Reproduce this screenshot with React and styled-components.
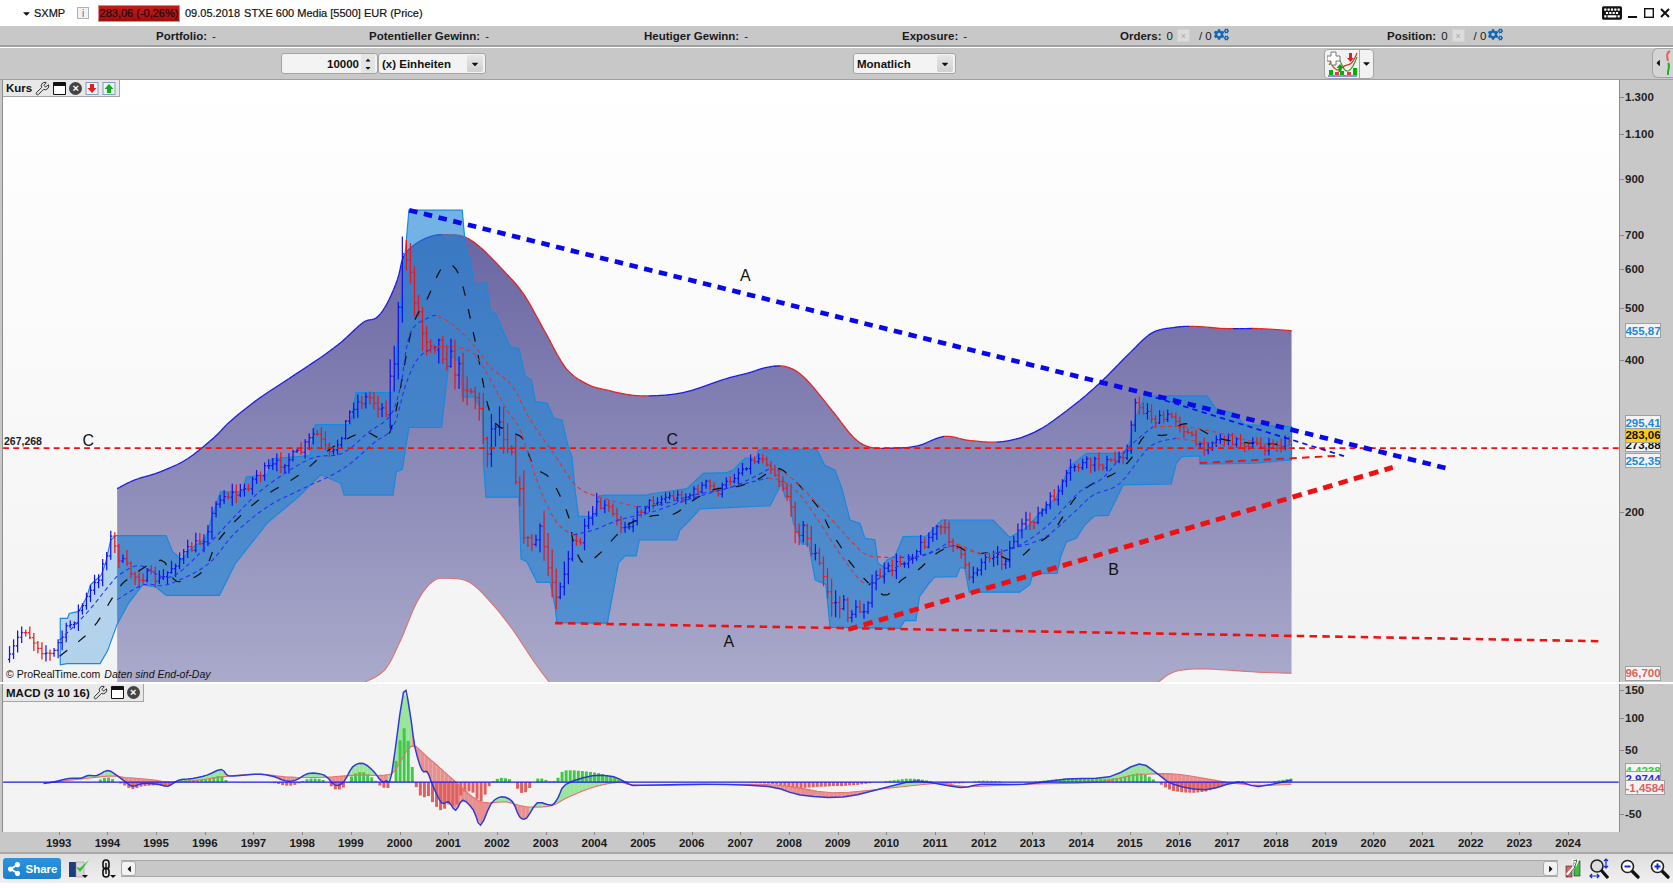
import React from "react";
import styled, { createGlobalStyle } from "styled-components";
import { FaCogs, FaKeyboard, FaShareAlt, FaCaretDown, FaCaretUp, FaCaretLeft, FaCaretRight } from "react-icons/fa";
import { Wrench } from "lucide-react";

const Global = createGlobalStyle`
  html, body { margin: 0; padding: 0; background: #fff; overflow: hidden; }
  * { box-sizing: border-box; }
`;

const FONT = `"Liberation Sans", Arial, sans-serif`;

/* ---------- data, expressed in a 1568-wide reference frame ---------- */
const interp = (pts, x) => {
  if (x <= pts[0][0]) return pts[0][1];
  for (let i = 1; i < pts.length; i++) {
    if (x <= pts[i][0]) {
      const [a, b] = pts[i - 1];
      const [c, d] = pts[i];
      return b + ((d - b) * (x - a)) / (c - a || 1);
    }
  }
  return pts[pts.length - 1][1];
};
const toPts = (a) => a.map((p) => p.join(",")).join(" ");
const smooth = (pts, n = 5) => {
  const out = [];
  for (let i = 0; i < pts.length - 1; i++) {
    const p0 = pts[Math.max(0, i - 1)];
    const p1 = pts[i];
    const p2 = pts[i + 1];
    const p3 = pts[Math.min(pts.length - 1, i + 2)];
    for (let k = 0; k < n; k++) {
      const t = k / n;
      const f = (a, b, c, d) =>
        0.5 * (2 * b + (c - a) * t + (2 * a - 5 * b + 4 * c - d) * t * t + (3 * b - a - 3 * c + d) * t * t * t);
      out.push([f(p0[0], p1[0], p2[0], p3[0]), f(p0[1], p1[1], p2[1], p3[1])]);
    }
  }
  out.push(pts[pts.length - 1]);
  return out;
};

const envTop = smooth([[109,458],[125,450],[150,442],[175,430],[200,410],[215,395],[240,375],[270,355],[300,335],[320,320],[340,302],[352,298],[362,285],[372,262],[378,240],[390,228],[405,221],[420,220],[435,222],[450,232],[470,252],[490,275],[510,310],[530,345],[550,360],[570,366],[600,371],[640,368],[680,355],[700,350],[720,344],[738,344],[755,355],[780,385],[800,410],[815,419],[835,420],[860,418],[885,409],[910,413],[940,414],[970,405],[1000,385],[1030,360],[1060,330],[1080,312],[1100,307],[1120,306],[1150,308],[1180,308],[1211,310]]);
const envRight = smooth([[1211,631],[1180,630],[1150,628],[1120,627],[1100,630],[1085,640]]);
const envBlob = smooth([[515,640],[500,620],[480,590],[460,565],[440,546],[420,542],[405,545],[390,565],[375,600],[360,628],[340,640]]);
const chanUpper = [[55.6,579.5],[62.5,579.5],[64,575],[73,573],[76.5,567],[80.6,559],[84,548],[94,539],[98,528],[103,506],[108,502],[155,502],[161,517],[170,525],[176.5,515.5],[192,504.5],[198,484],[206,461],[227,461],[230,447],[250,445],[254,430],[290,427],[295,398],[328,398],[333,368],[367.8,367.7],[382.8,197],[432.8,197],[435,222],[437,237.4],[440.6,243.6],[443.7,265.5],[455.6,265.5],[459.3,292],[464,293.6],[472,312.4],[478,325],[486,326.5],[492,353],[497.7,356],[501.5,376.5],[512.5,378],[518.7,392],[526.4,393.6],[532.6,420],[535.7,428],[538.9,460.8],[542,484],[556.7,484],[560.7,464.9],[567,464],[606,464],[609,463],[635.7,459],[643.5,458],[659,443.6],[681,443],[687.3,440.5],[693.5,434],[698,429.5],[709,429],[710.7,421.7],[765.4,421],[773,436],[782.6,440.5],[789,457.7],[796.7,487.4],[806,490.5],[810.7,504.5],[820,506],[823,528],[828,531],[831,525],[839,521],[846.6,503],[868.5,502.4],[882.6,487.4],[931,487.4],[946.6,503.6],[962,495],[976,479.5],[990,467],[1003,437],[1018.5,425],[1053,425],[1059,415.5],[1064,393.6],[1073,371],[1131.7,371],[1140,383],[1157,387.4],[1167,398],[1211,400]];
const chanLower = [[1211,431],[1177,434],[1125,435],[1125,427.4],[1108,428],[1103,434],[1098,453.6],[1053,454.5],[1039,483],[1026,483.6],[1017,492],[1009,504.5],[999.8,507.7],[994.4,521.7],[991,537.4],[968.5,537.4],[965.4,548],[956,555],[908.5,555],[904.4,532.7],[900,532],[896.6,540.5],[876,541],[870,548],[862,559],[858.5,581.7],[848,581.7],[843.5,589],[778,588],[774,547.7],[764,543.6],[758,510],[751.4,510],[748,500],[743.5,490],[739.8,466],[735.7,466],[732.6,453],[721.7,474],[687,475.5],[656,477],[645,489],[637,496.7],[634,506],[599,506],[596,521],[585.7,521],[579.5,527.4],[569,584],[521.7,583.6],[520,568.6],[515.4,545.8],[503,545.8],[493.5,526.4],[488,524],[486,466],[455,466],[453,437],[451.5,384],[443.7,372],[432.8,372],[431,340],[423,334],[420,342],[413.4,400.5],[382.8,400.5],[376.5,440],[371,442],[367.8,464],[322,464],[318.7,453],[300,445],[280,465],[250,490],[220,528],[205,558],[155,558],[145,550],[133,548],[120,565],[109,585],[100,610],[93,622],[62,622],[55.6,623]];

const mid = [[8,618],[15,600],[22,588],[30,600],[40,610],[48,615],[55,600],[70,578],[90,545],[103,505],[112,525],[125,540],[140,540],[150,545],[165,525],[190,505],[205,465],[225,462],[240,445],[260,435],[280,425],[295,405],[310,430],[330,380],[345,372],[360,385],[370,330],[378,230],[385,260],[395,310],[410,320],[430,350],[445,370],[455,420],[465,390],[480,420],[493,512],[507.6,503],[515,540],[522,550],[534,518.6],[543.5,506],[559,475],[570,476],[581,493.6],[590.4,490],[606,472],[624.8,465.5],[643.5,465.5],[662,453],[671.7,462],[687.3,446.7],[703,432.7],[715.4,428],[728,446.7],[737,460.8],[742,487],[753,498],[767,528],[778,562],[795,573],[809,572],[821.6,540.5],[843.5,528],[859,515.5],[881,493.6],[896.6,512],[907.6,540.5],[918.5,528],[931,517],[940,528],[953,500],[978,478],[993.5,459],[1006,437],[1025,434],[1043.5,434],[1056,422],[1065,378],[1085,395],[1100,390],[1125,420],[1145,410],[1165,415],[1190,420],[1211,412]];

let seed = 7;
const rnd = () => {
  seed = (seed * 16807) % 2147483647;
  return seed / 2147483647;
};
const bars = [];
{
  let prev = mid[0][1];
  for (let x = 8; x <= 1211; x += 3.8) {
    const base = interp(mid, x);
    const amp = x > 360 && x < 545 ? 24 : x > 740 && x < 800 ? 18 : x > 1100 ? 8 : x > 560 && x < 730 ? 7 : 10;
    const close = base + (rnd() - 0.5) * amp;
    const hi = Math.min(prev, close) - rnd() * amp * 0.7 - 1;
    const lo = Math.max(prev, close) + rnd() * amp * 0.7 + 1;
    bars.push({ x, open: prev, close, hi, lo, up: close < prev });
    prev = close;
  }
}

const midDash = smooth([[55,615],[85,590],[108,555],[120,542],[150,525],[165,545],[190,535],[205,505],[240,470],[280,445],[310,420],[340,405],[365,405],[385,310],[400,280],[415,250],[430,258],[445,320],[460,390],[480,405],[490,412],[500,437],[515,448],[526.4,468.6],[534,489],[537,507.6],[546.7,528],[562,518.6],[576.4,503],[590.4,490.5],[610.7,483.6],[631,482],[650,468.6],[668.5,459],[690.4,456],[709,450],[728,439],[742,448],[754.5,460.8],[768.6,478],[778,496.7],[789,514],[800,531],[828,557.7],[845,543.6],[860.7,534],[878,518.6],[895,511.7],[910.7,518.6],[931,518.6],[951,525],[968.5,512],[985.7,500],[996.6,484],[1009,465.5],[1026,452.4],[1045,443.6],[1060.7,429.5],[1073,409],[1093.5,407.6],[1112,397],[1140,410],[1170,415],[1211,417]]);
const BL = "#2a2ff0";
const RD = "#e03030";
const fastRuns = [
  [BL, [[55,600],[80,575],[103,547],[112,538],[130,530],[150,540],[165,538],[190,515],[225,478],[250,455],[290,430],[320,425],[345,405],[365,390],[375,362],[384,312],[403,297],[410,296]]],
  [RD, [[410,296],[425,305],[445,325],[460,345],[480,362],[496.7,393.6],[518.5,425],[540.4,456],[565.4,467],[596.7,475]]],
  [BL, [[596.7,475],[618.6,473],[650,464],[687,456],[721.7,439]]],
  [RD, [[721.7,439],[740.4,446.7],[768.6,475],[806,515.5],[821.6,521.7],[843.5,522.4]]],
  [BL, [[843.5,522.4],[868.5,520],[890,507.7]]],
  [RD, [[890,507.7],[903,512],[918.5,518.6],[934,518.6]]],
  [BL, [[934,518.6],[956,510.8],[981,493.6],[1012,461],[1034,448],[1059,418.6],[1081,400]]],
  [RD, [[1081,400],[1110,400],[1140,405],[1180,415],[1211,418]]],
];
const slowRuns = [
  [BL, [[109,562],[134,548],[156,548],[194,529],[219,500],[250,475],[281,459],[320,440],[350,415],[368,400],[380,360],[392,335],[409,325]]],
  [RD, [[409,325],[425,325],[443,331],[456,350],[475,385],[487,403],[506,459],[521.7,490],[537,501.4]]],
  [BL, [[537,501.4],[556,496.7],[581,487],[612,479.5],[643.5,468.6],[687.3,456],[720,448]]],
  [RD, [[720,448],[737.3,453],[756,471.7],[787,518.6],[806,543.6],[815,547]]],
  [BL, [[815,547],[821.6,543.6],[846.6,528],[878,515.5],[896.6,510.8]]],
  [RD, [[896.6,510.8],[915,518],[934,518.6]]],
  [BL, [[934,518.6],[943.5,515.5],[978,504.5],[1006,481],[1025,464],[1050,453],[1078,418.6],[1103,410.8]]],
  [RD, [[1103,410.8],[1125,414],[1170,420],[1211,420]]],
];

const z = (p) => p.map(([a, b]) => [a / 3, 618.6 + b / 3.2]);
const macd = smooth([...z([[120,370],[150,365],[190,355],[225,354],[245,346],[270,346],[300,331],[325,345],[350,365],[370,378],[400,370],[440,372],[470,378],[500,360],[540,355],[580,345],[620,328],[640,347],[680,345],[730,342],[770,350],[800,362],[830,360],[865,340],[910,345],[940,375],[965,365],[990,320],[1020,310],[1050,335],[1070,362],[1085,362],[1100,340],[1133,97],[1150,150],[1165,260],[1185,330],[1200,335],[1215,375],[1240,428],[1260,425],[1280,450],[1300,420],[1330,450],[1350,495],[1380,430],[1410,410],[1440,425],[1460,470],[1480,473],[1510,428],[1550,435]]),[523,747],[530,735],[555,727],[575,728],[590,735],[600,736],[660,735],[720,737],[750,745],[790,747],[830,738],[860,732],[900,738],[920,735],[960,735],[1000,730],[1040,728],[1068,716],[1085,725],[1100,735],[1130,740],[1160,733],[1180,737],[1211,731]], 3);
const signal = smooth([...z([[120,370],[300,348],[350,352],[420,358],[470,365],[540,362],[640,348],[730,342],[800,350],[900,352],[1000,345],[1080,345],[1110,330],[1155,258],[1200,290],[1280,365],[1350,425],[1420,425],[1480,440],[1550,437]]),[530,748],[555,738],[580,733],[600,736],[700,735],[740,737],[780,743],[830,739],[880,734],[905,737],[960,735],[1030,733],[1060,727],[1090,725],[1115,727],[1150,733],[1180,736],[1211,735]], 3);

const macdSteps = [];
for (let x = 40; x <= 1211; x += 3.8) macdSteps.push({ x, m: interp(macd, x), s: interp(signal, x) });

const priceTicks = [["1.300",91],["1.100",126],["900",168],["700",220],["600",252],["500",289],["400",337],["200",480]];
const priceTags = [
  { t: "455,87", y: 310, c: "#1a88e0" },
  { t: "295,41", y: 396, c: "#1a88e0" },
  { t: "273,88", y: 417, c: "#111" },
  { t: "252,35", y: 432, c: "#1a88e0" },
  { t: "283,06", y: 408, c: "#111", bg: "#ffcc11" },
  { t: "96,700", y: 631, c: "#e06060" },
];
const macdTicks = [["150",647],["100",673],["50",703],["-50",763]];
const years = Array.from({ length: 32 }, (_, i) => 1993 + i);

/* ---------- layout ---------- */
const Shell = styled.div`
  width: 1673px; height: 888px; display: flex; flex-direction: column;
  background: #fff; font-family: ${FONT}; color: #111; overflow: hidden;
`;
const TopBar = styled.div`
  height: 26px; flex: none; display: flex; align-items: center; padding-left: 21px;
  font-size: 11px; background: #fff; -webkit-text-stroke: 0.2px #111;
`;
const Ticker = styled.span` margin-left: 2px; width: 43px; `;
const InfoBox = styled.span`
  width: 12px; height: 12px; border: 1px solid #a8b4c0; background: #f2f2f2; color: #667;
  font: 10px ${FONT}; display: flex; align-items: center; justify-content: center; margin-right: 9px;
  -webkit-text-stroke: 0;
`;
const Quote = styled.span`
  width: 82px; height: 17px; background: linear-gradient(#c41a1a, #9c0f0f); border: 1px solid #d88;
  display: flex; align-items: center; justify-content: center; color: #2a0505; margin-right: 5px; white-space: nowrap;
`;
const Dated = styled.span` margin-right: 4px; `;
const WindowKeys = styled.div`
  margin-left: auto; display: flex; align-items: center; padding-right: 3px; color: #111;
`;
const WinGlyph = styled.svg` display: block; margin-left: 6px; `;

const InfoBar = styled.div`
  height: 21px; flex: none; background: #c8c8c8; border-bottom: 2px solid #a0a0a0;
  display: grid; grid-template-columns: 213px 275px 258px 218px 267px auto;
  padding-left: 156px; align-items: center; font-size: 11.5px; font-weight: bold;
`;
const InfoCell = styled.span`
  display: flex; align-items: center; white-space: nowrap; color: #1a1a1a;
`;
const Plain = styled.span` font-weight: normal; margin-left: 5px; `;
const OffBox = styled.span`
  width: 13px; height: 13px; background: #dcdcdc; border: 1px solid #d0d0d0; margin: 0 4px 0 4px;
  font: 9px ${FONT}; color: #aaa; display: flex; align-items: center; justify-content: center;
`;
const Cogs = styled(FaCogs)` color: #1466b8; margin-left: 2px; margin-top: -3px; `;

const Toolbar = styled.div`
  height: 32px; flex: none; margin-top: 1px; background: #c8c8c8; border-bottom: 1px solid #a0a0a0;
  display: flex; align-items: center; padding-left: 281px; position: relative;
`;
const Field = styled.div`
  height: 21px; border: 1px solid #a4a4a4; border-radius: 3px; background: #f3f3f3;
  display: flex; align-items: center; font-size: 11.5px; font-weight: bold; width: ${(p) => p.$w}px;
  margin-left: ${(p) => p.$ml || 0}px; flex: none; position: relative;
`;
const SpinValue = styled.span` flex: 1; text-align: right; padding-right: 2px; `;
const SpinBtns = styled.span`
  width: 14px; height: 19px; display: flex; flex-direction: column; align-items: center; justify-content: center;
  background: #e4e4e4; margin-right: 2px; font-size: 8px; line-height: 8px;
`;
const FieldLabel = styled.span` flex: 1; padding-left: 3px; white-space: nowrap; `;
const Drop = styled.span`
  width: 16px; height: 17px; background: linear-gradient(#e8e8e8, #cfcfcf); border-radius: 2px; margin-right: 2px;
  display: flex; align-items: center; justify-content: center; font-size: 11px;
`;
const IndButton = styled.div`
  margin-left: 368px; width: 50px; height: 30px; display: flex; border: 1px solid #a4a4a4; border-radius: 4px;
  background: #f2f2f2; flex: none;
`;
const IndIcon = styled.div` width: 35px; border-right: 1px solid #a4a4a4; padding: 1px 0 0 2px; `;
const IndDrop = styled.div` flex: 1; display: flex; align-items: center; justify-content: center; font-size: 11px; `;
const SideTab = styled.div`
  position: absolute; right: 0; top: 0; width: 21px; height: 30px; background: #d4d4d4;
  border: 1px solid #a4a4a4; border-right: 0; border-radius: 6px 0 0 6px; display: flex; align-items: center;
  font-size: 10px;
`;

const Pane = styled.div`
  height: ${(p) => p.$h}px; flex: none; display: flex; background: #c8c8c8; margin-top: ${(p) => p.$mt || 0}px;
`;
const Plot = styled.div`
  margin-left: 2px; width: 1618px; height: 100%; position: relative;
  border-left: 1px solid #8c8c8c; border-right: 1px solid #8c8c8c;
  background: ${(p) => (p.$flat ? "#f3f3f3" : "linear-gradient(#ffffff, #f3f3f3)")};
`;
const ChartSvg = styled.svg` display: block; width: 100%; height: 100%; `;
const PaneBar = styled.div`
  position: absolute; left: 0; top: 0; height: ${(p) => p.$h}px; display: flex; align-items: center; gap: 3px;
  padding: 0 3px; background: #e8e8e8; border: 1px solid #a4a4a4; border-width: 0 1px 1px 0;
  font-size: 11.5px; font-weight: bold;
`;
const Win = styled.span`
  width: 13px; height: 13px; border: 1px solid #111; border-top: 4px solid #111; background: #fff; border-radius: 1px;
`;
const CloseDot = styled.span`
  width: 13px; height: 13px; border-radius: 50%; background: #444; color: #fff; font-size: 11px; line-height: 12px;
  text-align: center; font-weight: bold;
`;
const DocArrow = styled.svg` display: block; `;
const Credit = styled.div`
  position: absolute; left: 3px; bottom: 0; font-size: 10.5px; color: #111; white-space: nowrap; height: 14px;
`;
const CreditNote = styled.i` margin-left: 4px; `;
const LevelTag = styled.span`
  position: absolute; left: 1px; top: 355px; font-size: 10.5px; font-weight: bold; color: #222; line-height: 12px;
`;
const Axis = styled.div` flex: 1; position: relative; `;
const Tick = styled.span`
  position: absolute; left: 5px; font-size: 11.5px; font-weight: bold; color: #222; transform: translateY(-50%);
  &::before {
    content: ""; position: absolute; left: -5px; top: 50%; width: 4px; height: 1px; background: #888;
  }
`;
const Tag = styled.span`
  position: absolute; left: 5px; width: ${(p) => p.$w || 36}px; height: ${(p) => p.$h || 15}px; border: 1px solid #a0a0a0;
  background: ${(p) => p.$bg || "#f3f3f3"}; color: ${(p) => p.$c}; font-size: 11.5px; font-weight: bold;
  display: flex; align-items: center; justify-content: center; overflow: hidden; white-space: nowrap;
`;

const TimeAxis = styled.div`
  height: 22px; flex: none; background: #c8c8c8; border-bottom: 2px solid #a8a8a8; display: flex; padding-left: 34.4px;
`;
const Year = styled.span`
  flex: 0 0 48.7px; text-align: center; font-size: 11.5px; font-weight: bold; color: #1a1a1a; padding-top: 5px;
  position: relative;
  &::before { content: ""; position: absolute; left: 50%; top: 0; width: 1px; height: 3px; background: #888; }
`;
const BottomBar = styled.div`
  height: 29px; flex: none; background: linear-gradient(#dedede, #f0f0f0); display: flex; align-items: center; padding: 0 3px;
`;
const Share = styled.div`
  width: 58px; height: 21px; border-radius: 3px; background: linear-gradient(#2b93df, #1e80cd); color: #fff; font-size: 11.5px;
  font-weight: bold; display: flex; align-items: center; justify-content: center; gap: 5px; flex: none;
`;
const Scroll = styled.div`
  margin-left: 3px; flex: 1; height: 17px; background: #c8c8c8; border-top: 1px solid #a8a8a8; border-bottom: 1px solid #a8a8a8;
  display: flex; justify-content: space-between; align-items: center;
`;
const ScrollEnd = styled.span`
  width: 15px; height: 15px; background: #f3f3f3; border: 1px solid #aaa; border-radius: 3px; display: flex;
  align-items: center; justify-content: center; font-size: 10px;
`;
const Glyph = styled.svg` display: block; flex: none; margin-left: ${(p) => p.$ml || 0}px; `;

/* ---------- small drawings ---------- */
const DocIcon = ({ up }) => (
  <DocArrow width="14" height="13" viewBox="0 0 13 13">
    <rect x="0.5" y="0.5" width="12" height="12" fill="#eef3f8" stroke="#7fa0c0" />
    {up ? <path d="M6.5 2 L11 7 H8.5 V11 H4.5 V7 H2 Z" fill="#10b010" /> : <path d="M6.5 11 L11 6 H8.5 V2 H4.5 V6 H2 Z" fill="#e02020" />}
  </DocArrow>
);
const Magnifier = ({ sign }) => (
  <Glyph width="20" height="20" viewBox="0 0 20 20" $ml={sign === "-" ? 11 : 10}>
    <path d="M11.5 11.5 L18 18" stroke="#111" strokeWidth="3.2" strokeLinecap="round" />
    <circle cx="7.5" cy="7.5" r="6" fill="#fff" stroke="#222" strokeWidth="1.6" />
    <path d="M4.5 7.5 H10.5" stroke="#0a2ad8" strokeWidth="2" />
    {sign === "+" && <path d="M7.5 4.5 V10.5" stroke="#0a2ad8" strokeWidth="2" />}
  </Glyph>
);

const Price = () => {
  const area = [...envTop, ...envRight, ...envBlob, [109, 640]];
  const channel = [...chanUpper, ...chanLower];
  return (
    <ChartSvg viewBox="1.875 75 1516.4 564.2" preserveAspectRatio="none">
      <defs>
        <linearGradient id="env" gradientUnits="userSpaceOnUse" x1="0" y1="220" x2="0" y2="640">
          <stop offset="0" stopColor="#6a66a3" />
          <stop offset="1" stopColor="#aaaacb" />
        </linearGradient>
        <clipPath id="leftOfEnv"><rect x="0" y="0" width="109" height="700" /></clipPath>
        <clipPath id="rightOfEnv"><rect x="109" y="0" width="1200" height="700" /></clipPath>
      </defs>
      <polygon points={toPts(area)} fill="url(#env)" />
      {envTop.slice(1).map((p, i) => (
        <line key={i} x1={envTop[i][0]} y1={envTop[i][1]} x2={p[0]} y2={p[1]} strokeWidth="1.2"
          stroke={p[1] <= envTop[i][1] ? "#1a1ae0" : "#e82020"} />
      ))}
      <polyline points={toPts(envRight)} fill="none" stroke="#e07070" strokeWidth="1" />
      <polyline points={toPts(envBlob)} fill="none" stroke="#e07070" strokeWidth="1" />
      <polygon points={toPts(channel)} fill="#1e84d6" fillOpacity="0.3" clipPath="url(#leftOfEnv)" />
      <polygon points={toPts(channel)} fill="#1e84d6" fillOpacity="0.62" clipPath="url(#rightOfEnv)" />
      <polygon points={toPts(channel)} fill="none" stroke="#1a88dc" strokeWidth="1.1" />
      {bars.map((b, i) => {
        const c = b.up ? "#1010f0" : "#f01414";
        return (
          <g key={i} stroke={c} strokeWidth="1.15">
            <line x1={b.x} x2={b.x} y1={b.hi} y2={b.lo} />
            <line x1={b.x - 1.5} x2={b.x} y1={b.open} y2={b.open} />
            <line x1={b.x} x2={b.x + 1.5} y1={b.close} y2={b.close} />
          </g>
        );
      })}
      <polyline points={toPts(midDash)} fill="none" stroke="#111" strokeWidth="1.2" strokeDasharray="9 13" />
      {[...fastRuns, ...slowRuns].map(([c, pts], i) => (
        <polyline key={i} points={toPts(smooth(pts))} fill="none" stroke={c} strokeWidth="1" strokeDasharray="4 3" />
      ))}
      <line x1="2" x2="1518" y1="420" y2="420" stroke="#f01010" strokeWidth="1.8" strokeDasharray="5.5 4" />
      <line x1="520" y1="584" x2="1502" y2="601" stroke="#f01010" strokeWidth="2.4" strokeDasharray="7 5" />
      <line x1="1125" y1="434" x2="1258" y2="427" stroke="#f01010" strokeWidth="1.8" strokeDasharray="7 5" />
      <line x1="1075" y1="370" x2="1262" y2="428" stroke="#1010f0" strokeWidth="1.6" strokeDasharray="5 4" />
      <line x1="383" y1="197" x2="1361" y2="440" stroke="#0808ee" strokeWidth="4.4" strokeDasharray="8 6.2" />
      <line x1="795" y1="590" x2="1306" y2="438" stroke="#f01010" strokeWidth="4.6" strokeDasharray="9 6" />
      <g fontFamily={FONT} fontSize="15" fill="#111" textAnchor="middle">
        <text x="698.5" y="263">A</text>
        <text x="683" y="606">A</text>
        <text x="1044" y="539">B</text>
        <text x="82" y="418">C</text>
        <text x="630" y="417">C</text>
      </g>
    </ChartSvg>
  );
};

const Macd = () => (
  <ChartSvg viewBox="1.875 641 1516.4 138.7" preserveAspectRatio="none">
    {macdSteps.slice(1).map((p, i) => {
      const a = macdSteps[i];
      return (
        <polygon key={i} points={`${a.x},${a.m} ${p.x},${p.m} ${p.x},${p.s} ${a.x},${a.s}`}
          fill={p.m < p.s ? "#9be49b" : "#e88f8f"} />
      );
    })}
    {macdSteps.map((p, i) => {
      const d = (p.s - p.m) * 0.85;
      if (Math.abs(d) < 0.7 || p.x < 90) return null;
      return (
        <rect key={i} x={p.x - 1.3} width="2.8" y={d > 0 ? 733 - d : 733} height={Math.abs(d)}
          fill={d > 0 ? "#40c848" : "#e06060"} />
      );
    })}
    <polyline points={toPts(signal)} fill="none" stroke="#e87070" strokeWidth="1" />
    <polyline points={toPts(macd)} fill="none" stroke="#3038d8" strokeWidth="1.4" />
    <line x1="2" x2="1518" y1="733" y2="733" stroke="#1c1cf0" strokeWidth="1.2" />
  </ChartSvg>
);

export default function App() {
  const py = (y) => y * 1.067 - 80;
  const my = (y) => y * 1.067 - 684;
  return (
    <Shell>
      <Global />
      <TopBar>
        <FaCaretDown size={11} />
        <Ticker>SXMP</Ticker>
        <InfoBox>i</InfoBox>
        <Quote>283,06 (-0,26%)</Quote>
        <Dated>09.05.2018</Dated>
        <span>STXE 600 Media [5500] EUR (Price)</span>
        <WindowKeys>
          <FaKeyboard size={20} />
          <WinGlyph width="10" height="10" viewBox="0 0 10 10"><rect y="8" width="9" height="2" fill="#111" /></WinGlyph>
          <WinGlyph width="10" height="10" viewBox="0 0 10 10"><rect x="0.7" y="0.7" width="8.6" height="8.6" fill="none" stroke="#111" strokeWidth="1.4" /></WinGlyph>
          <WinGlyph width="10" height="10" viewBox="0 0 10 10"><path d="M1 1 L9 9 M9 1 L1 9" stroke="#111" strokeWidth="2" /></WinGlyph>
        </WindowKeys>
      </TopBar>
      <InfoBar>
        <InfoCell>Portfolio:<Plain>-</Plain></InfoCell>
        <InfoCell>Potentieller Gewinn:<Plain>-</Plain></InfoCell>
        <InfoCell>Heutiger Gewinn:<Plain>-</Plain></InfoCell>
        <InfoCell>Exposure:<Plain>-</Plain></InfoCell>
        <InfoCell>Orders:<Plain>0</Plain><OffBox>×</OffBox><Plain>/ 0</Plain><Cogs size={15} /></InfoCell>
        <InfoCell>Position:<Plain>0</Plain><OffBox>×</OffBox><Plain>/ 0</Plain><Cogs size={15} /></InfoCell>
      </InfoBar>
      <Toolbar>
        <Field $w={97}>
          <SpinValue>10000</SpinValue>
          <SpinBtns><FaCaretUp size={8} /><FaCaretDown size={8} /></SpinBtns>
        </Field>
        <Field $w={108}>
          <FieldLabel>(x) Einheiten</FieldLabel>
          <Drop><FaCaretDown size={10} /></Drop>
        </Field>
        <Field $w={103} $ml={367}>
          <FieldLabel>Monatlich</FieldLabel>
          <Drop><FaCaretDown size={10} /></Drop>
        </Field>
        <IndButton>
          <IndIcon>
            <svg width="31" height="26" viewBox="0 0 31 26">
              <path d="M2 14 C8 4 11 4 15 14 S24 22 30 6" fill="none" stroke="#28a828" strokeWidth="1.2" />
              <path d="M2 8 C8 22 12 20 16 16 S24 18 30 2" fill="none" stroke="#e03030" strokeWidth="1.2" />
              <path d="M4 1 h5 v4 h4 v5 h-4 v4 h-5 v-4 h-4 v-5 h4 z" fill="#fff" stroke="#777" />
              <path d="M22 2 h3 v5 h2 l-3.500 4 -3.500 -4 h2 z" fill="#e02020" />
              <path d="M13 13 l3.500 4 h-2 v4 h-3 v-4 h-2 z" fill="#10a010" />
              <g fill="#00b400">
                <rect x="2" y="19" width="4" height="5" />
                <rect x="13" y="20" width="4" height="4" />
                <rect x="26" y="17" width="4" height="7" />
              </g>
              <g fill="#e04040">
                <rect x="8" y="21" width="4" height="3" />
                <rect x="20" y="21" width="4" height="3" />
              </g>
              <rect x="1" y="24.500" width="29" height="1" fill="#2030c0" />
            </svg>
          </IndIcon>
          <IndDrop><FaCaretDown size={11} /></IndDrop>
        </IndButton>
        <SideTab>
          <FaCaretLeft size={10} />
          <svg width="10" height="26" viewBox="0 0 10 26">
            <path d="M7 1 C3 3 4 7 5 11" fill="none" stroke="#e86060" strokeWidth="2" />
            <path d="M5 13 C8 16 4 20 5 25" fill="none" stroke="#20b020" strokeWidth="2" />
          </svg>
        </SideTab>
      </Toolbar>
      <Pane $h={602}>
        <Plot>
          <Price />
          <PaneBar $h={17}>
            Kurs <Wrench size={15} strokeWidth={1.4} /><Win /><CloseDot>×</CloseDot><DocIcon /><DocIcon up />
          </PaneBar>
          <LevelTag>267,268</LevelTag>
          <Credit>© ProRealTime.com<CreditNote>Daten sind End-of-Day</CreditNote></Credit>
        </Plot>
        <Axis>
          {priceTicks.map(([t, y]) => <Tick key={t} style={{ top: py(y) }}>{t}</Tick>)}
          {priceTags.map((g) => (
            <Tag key={g.t} $c={g.c} $bg={g.bg} style={{ top: py(g.y) - 7.5 }}>{g.t}</Tag>
          ))}
        </Axis>
      </Pane>
      <Pane $h={148} $mt={2}>
        <Plot $flat>
          <Macd />
          <PaneBar $h={18}>
            MACD (3 10 16) <Wrench size={15} strokeWidth={1.4} /><Win /><CloseDot>×</CloseDot>
          </PaneBar>
        </Plot>
        <Axis>
          {macdTicks.map(([t, y]) => <Tick key={t} style={{ top: my(y) }}>{t}</Tick>)}
          <Tag $c="#40c848" style={{ top: 79 }}>4,4238</Tag>
          <Tag $c="#2a2ad8" style={{ top: 87 }}>2,9744</Tag>
          <Tag $c="#e06060" $w={40} style={{ top: 96 }}>-1,4584</Tag>
        </Axis>
      </Pane>
      <TimeAxis>
        {years.map((y) => <Year key={y}>{y}</Year>)}
      </TimeAxis>
      <BottomBar>
        <Share><FaShareAlt size={14} />Share</Share>
        <Glyph width="24" height="20" viewBox="0 0 24 20" $ml={6}>
          <path d="M2 3 h7 v15 h-7 z" fill="#1c3f7a" />
          <path d="M9 3 h8 v15 h-8 z" fill="#d8d8d8" stroke="#888" strokeWidth="0.5" />
          <path d="M9 8 l4 5 l9 -12 l-9 8 z" fill="#30c030" />
          <path d="M15 16 h6 l-3 3 z" fill="#111" />
        </Glyph>
        <Glyph width="20" height="20" viewBox="0 0 20 20" $ml={7}>
          <rect x="5" y="1" width="6" height="9" rx="3" fill="none" stroke="#111" strokeWidth="1.6" />
          <rect x="5" y="9" width="6" height="9" rx="3" fill="none" stroke="#111" strokeWidth="1.6" />
          <path d="M8 4 v11" stroke="#111" strokeWidth="1.4" />
          <path d="M12 16 h6 l-3 3 z" fill="#111" />
        </Glyph>
        <Scroll>
          <ScrollEnd><FaCaretLeft size={10} /></ScrollEnd>
          <ScrollEnd><FaCaretRight size={10} /></ScrollEnd>
        </Scroll>
        <Glyph width="17" height="22" viewBox="0 0 17 22" $ml={6}>
          <rect x="10" y="3" width="6" height="15" fill="#40c040" stroke="#222" strokeWidth="0.6" />
          <rect x="2" y="8" width="6" height="11" fill="#e06060" stroke="#222" strokeWidth="0.6" />
          <path d="M3 17 L10 9 M8 3 L13 3 L11 8" stroke="#fff" strokeWidth="3" fill="none" />
          <path d="M3 19 L11 9 M9 3 L13 2 L11 8" stroke="#222" strokeWidth="0.7" fill="none" />
        </Glyph>
        <Glyph width="20" height="22" viewBox="0 0 20 22" $ml={8}>
          <circle cx="8" cy="8" r="6" fill="#ddd" stroke="#222" strokeWidth="1.6" />
          <path d="M12 12 L19 20" stroke="#111" strokeWidth="3.2" />
          <path d="M17 1 v9 M15 3 l2 -2 l2 2 M15 8 l2 2 l2 -2" fill="none" stroke="#0a2ad8" strokeWidth="1.2" />
          <path d="M1 18 h9 M3 16 l-2 2 l2 2 M8 16 l2 2 l-2 2" fill="none" stroke="#0a2ad8" strokeWidth="1.2" />
        </Glyph>
        <Magnifier sign="-" />
        <Magnifier sign="+" />
      </BottomBar>
    </Shell>
  );
}
